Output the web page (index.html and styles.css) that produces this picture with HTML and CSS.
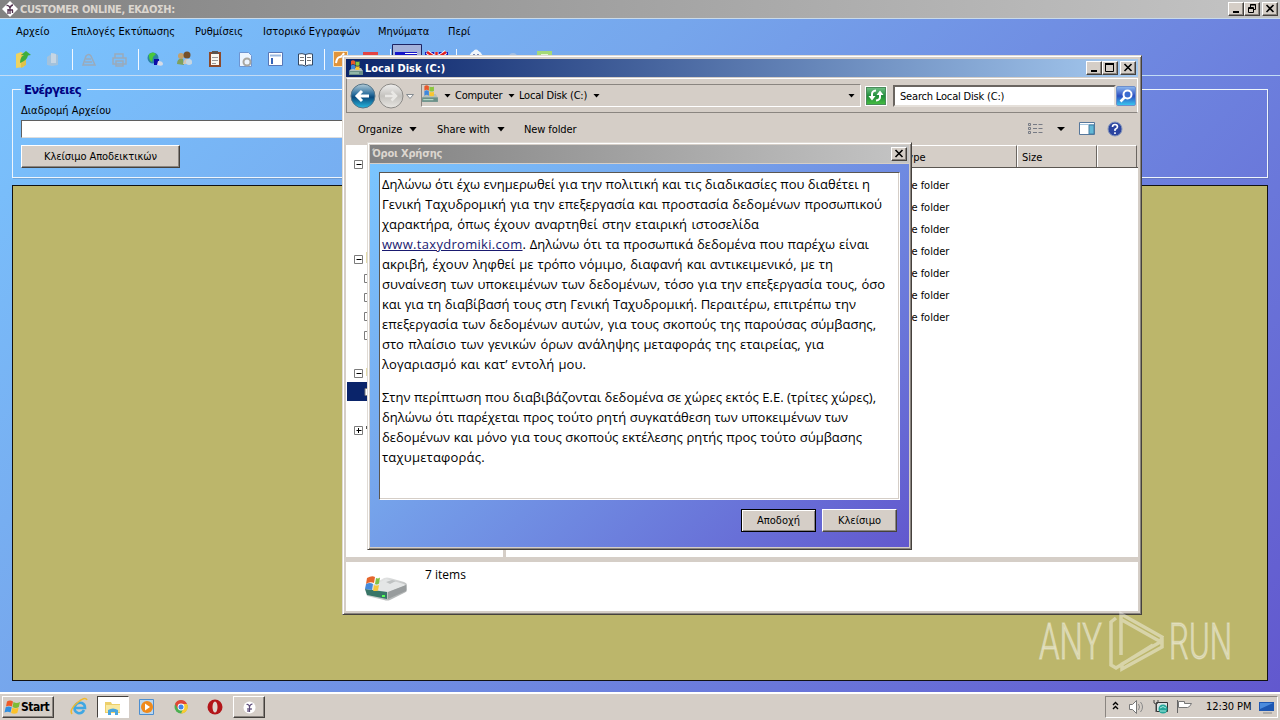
FILE: index.html
```html
<!DOCTYPE html>
<html lang="el">
<head>
<meta charset="utf-8">
<title>Customer Online</title>
<link rel="stylesheet" href="styles.css">
</head>
<body>
<svg class="defs" width="0" height="0">
  <defs>
    <linearGradient id="gb" x1="0" y1="0" x2="0" y2="1"><stop offset="0" stop-color="#b4ccd8"/><stop offset=".42" stop-color="#2c6f9e"/><stop offset=".55" stop-color="#0b4a7d"/><stop offset="1" stop-color="#27b8e0"/></linearGradient>
    <linearGradient id="gg" x1="0" y1="0" x2="0" y2="1"><stop offset="0" stop-color="#f0efee"/><stop offset=".5" stop-color="#c4c2be"/><stop offset="1" stop-color="#e8e6e2"/></linearGradient>
    <linearGradient id="gm" x1="0" y1="0" x2="1" y2="1"><stop offset="0" stop-color="#f4f4f4"/><stop offset="1" stop-color="#a4a8a8"/></linearGradient>
    <symbol id="flag" viewBox="0 0 16 16"><path d="M2.500 2.500q3-2 6 0L7.400 7.500Q4.500 6 1.500 7.500z" fill="#ee5a27"/><path d="M9 3q3 1.800 6.500 0L14.300 8q-3 1.800-6.300 0z" fill="#7dbb35"/><path d="M1.200 8.300q3-1.600 6 0L6 13.500q-2.700-1.600-6 0z" fill="#2f8ee0"/><path d="M7.800 8.800q3 1.600 6.300 0L12.800 14q-3 1.600-6.200 0z" fill="#fcc22a"/></symbol>
    <symbol id="disk" viewBox="0 0 16 16"><path d="M1 11l3-3h9l2 3v4H1z" fill="#b3bfbc"/><path d="M1 11h14v4H1z" fill="#6b9088"/><path d="M2 13h9" stroke="#b8dcc8"/><path d="M3 1q2-1.500 4 0v4Q5 3.500 3 5z" fill="#e8582a"/><path d="M7.500 1.300q2 1 4 0v4q-2 1-4 0z" fill="#8cc63f"/><path d="M3 5.500q2-1.500 4 0V9.500Q5 8 3 9.500z" fill="#3d87dc"/><path d="M7.500 6q2 1 4 0v3.500q-2 1-4 0z" fill="#f9c52f"/></symbol>
    <symbol id="cust" viewBox="0 0 16 16"><path d="M8 0l8 8-8 8-8-8z" fill="#fff"/><path d="M4.500 4.500Q7 4 8 7q1-3 3-3M8 6v7M6 9h5M6 13V8M10.500 9v3" stroke="#51304e" stroke-width="1.300" fill="none"/></symbol>
  </defs>
</svg>

<div class="desktop">
  <section class="app">
    <header class="titlebar app-title">
      <svg class="logo" width="16" height="16"><use href="#cust"/></svg>
      <span class="t-app">CUSTOMER ONLINE, ΕΚΔΟΣΗ:</span>
      <span class="grow"></span>
      <span class="cap"><svg width="14" height="12"><path d="M4 9h6" stroke="#000" stroke-width="2"/></svg></span>
      <span class="cap"><svg width="14" height="12" fill="none" stroke="#000"><path d="M5.500 4V1.500h5v5H9M5 2h6M3 5.500h6" /><path d="M3.500 4.500h5v5h-5z"/></svg></span>
      <span class="cap gap"><svg width="14" height="12"><path d="M3.500 2l7 7M10.500 2l-7 7" stroke="#000" stroke-width="1.600"/></svg></span>
    </header>
    <div class="client">
      <nav class="menubar">
        <span class="m1">Αρχείο</span><span class="m2">Επιλογές Εκτύπωσης</span><span class="m3">Ρυθμίσεις</span><span class="m4">Ιστορικό Εγγραφών</span><span class="m5">Μηνύματα</span><span class="m6">Περί</span>
      </nav>
      <div class="toolbar">
        <svg width="560" height="32">
          <g><path d="M16 11l5-2 3 2v13l-8 1z" fill="#eed35f"/><path d="M21 11l5 2v9l-5 3z" fill="#e0c24a"/><path d="M20 20q0-6 4-8l-3 0 5-4 5 4-3 .5q-1 5-8 7.500z" fill="#3fae3c"/></g>
          <g fill="#a3c2dc"><path d="M47 14l6-4 5 2v10l-6 1-5-1z"/><path d="M51 10l5 1v9h-5z" fill="#c6d6e4"/></g>
          <path d="M72.500 6v21M138.500 6v21M324.500 6v21M390.500 6v21M456.500 6v21" stroke="#f2f8ff"/>
          <g fill="none" stroke="#9aaabb" stroke-width="1.500"><path d="M83 22l3-9q3-3 5 0l4 9zM86 16h5M85 19h7" /><path d="M113 15h13v6h-13zM115 15v-4h8v4M116 18h7v5h-7z"/></g>
          <circle cx="153" cy="15" r="5.500" fill="#2b83a3"/><path d="M149 11q4-3 7 0l-3 3-1 5q-4-3-3-8z" fill="#49c83c"/><path d="M154 16h5v6h-5z" fill="#0c0ca8"/><path d="M158 18q5 0 5 3t-6 1z" fill="#d6dbe6"/>
          <circle cx="181" cy="13" r="3" fill="#c4a16c"/><circle cx="187" cy="12" r="3.500" fill="#74502a"/><path d="M177 21q0-6 6-5l1 6z" fill="#7fa05c"/><path d="M183 21q1-6 5-5t4 5z" fill="#d4c6b6"/><circle cx="189" cy="19" r="3" fill="#c5d7e5"/>
          <path d="M209 9h12v15h-12z" fill="#8d4a2b"/><path d="M211 11h8v11h-8z" fill="#f9f8f2"/><path d="M212 8h6v3h-6z" fill="#5b5550"/><path d="M212 14.500h6M212 17.500h6M212 20.500h4" stroke="#999"/>
          <path d="M239.500 9.500h9l3 3v11h-12z" fill="#edf5ff" stroke="#6d95d2"/><circle cx="247" cy="19" r="3.500" fill="none" stroke="#a9a7a1" stroke-width="2"/>
          <path d="M268.500 9.500h14v13h-14z" fill="#fff" stroke="#5877b6"/><path d="M270 12.500h11" stroke="#9bb9e0" stroke-width="2"/><path d="M271 15h2v6h-2z" fill="#3564b7"/>
          <path d="M298.500 11q3.500-1 7 .500 3.500-1.500 7-.500v11q-4-.5-7 1-3-1.500-7-1z" fill="#fff" stroke="#334863"/><path d="M305.500 11v11" stroke="#334863"/><path d="M300 14.500h4M300 17.500h4M307 14.500h4M307 17.500h4" stroke="#777"/>
          <path d="M333.500 8.500h14v15h-14z" fill="#e0943b" stroke="#f6e3c0"/><path d="M336 20q1-6 4-6 2 0 4-4" stroke="#fff" stroke-width="2" fill="none"/><path d="M363 9h15v12h-15z" fill="#e34343"/><path d="M366 12h9v5h-9z" fill="#fbd4d4"/>
          <path d="M392.500 1.500h29v22h-29z" fill="#a5b2da" stroke="#1d2464"/><path d="M395 9h22v4h-22z" fill="#1414c8"/><path d="M405 10.500h12" stroke="#fff"/><path d="M425 9h23v8h-23z" fill="#1717c0"/><path d="M427 9l10 7M446 9l-10 7M436.500 9v7" stroke="#fff" stroke-width="4"/><path d="M427 9l10 7M446 9l-10 7M436.500 9v7" stroke="#e02020" stroke-width="2.500"/>
          <circle cx="476" cy="14" r="6.500" fill="#f0f5fb"/><circle cx="476" cy="9" r="2.500" fill="#f0f5fb"/><circle cx="474" cy="12" r="1" fill="#5265a1"/><circle cx="478" cy="12" r="1" fill="#5265a1"/><circle cx="513" cy="14" r="4" fill="#a5bfe2"/><path d="M537 8h15v10h-15z" fill="#a5d979"/><path d="M541 11h7v4h-7z" fill="#e2f5d6"/>
        </svg>
      </div>
      <fieldset class="group">
        <legend>Ενέργειες</legend>
        <label class="path">Διαδρομή Αρχείου</label>
        <div class="field"></div>
        <button class="btn close-ev"><span>Κλείσιμο Αποδεικτικών</span></button>
      </fieldset>
      <div class="workarea"></div>
    </div>
  </section>

  <section class="explorer">
    <header class="titlebar ex-title">
      <svg class="ex-ico" width="16" height="16"><use href="#disk"/></svg>
      <span class="t-ex">Local Disk (C:)</span>
      <span class="grow"></span>
      <span class="cap"><svg width="14" height="12"><path d="M4 9h6" stroke="#000" stroke-width="2"/></svg></span>
      <span class="cap"><svg width="14" height="12"><path d="M2.500 2v7.500h8V2" fill="none" stroke="#000"/><path d="M2 2h9" stroke="#000" stroke-width="2"/></svg></span>
      <span class="cap gap"><svg width="14" height="12"><path d="M3.500 2l7 7M10.500 2l-7 7" stroke="#000" stroke-width="1.600"/></svg></span>
    </header>
    <div class="navband">
      <svg width="72" height="32"><circle cx="16" cy="16" r="12" fill="url(#gb)" stroke="#557487"/><path d="M22 16H10M15 11l-5 5 5 5" stroke="#fff" stroke-width="3" fill="none"/><circle cx="44" cy="16" r="12" fill="url(#gg)" stroke="#8b8986"/><path d="M38 16h11M44.500 11.500L49 16l-4.500 4.500" stroke="#e9e8e5" stroke-width="2.500" fill="none"/><path d="M59.500 14.500h7l-3.500 4z" fill="#fafafa" stroke="#858b90"/></svg>
      <div class="address">
        <svg class="ad-ico" width="18" height="18"><use href="#disk" width="18" height="18"/></svg>
        <i class="tri a1"></i><span class="ad1">Computer</span><i class="tri a2"></i><span class="ad2">Local Disk (C:)</span><i class="tri a3"></i><span class="grow"></span><i class="tri"></i>
      </div>
      <div class="refresh"><svg width="19" height="17"><path d="M2.500 9h7L6 13.500zM10.500 8h7L14 3.500z" fill="#fff"/><path d="M6 10V7q0-3 4-3.500M14 7v3q0 3-4 3.500" stroke="#fff" stroke-width="2" fill="none"/></svg></div>
      <div class="search"><span>Search Local Disk (C:)</span></div>
      <div class="mag"><svg width="18" height="18"><circle cx="10.500" cy="7.500" r="4" fill="#3b6cd0" stroke="#fff" stroke-width="2"/><path d="M7.500 10.500l-4 4" stroke="#fff" stroke-width="2.500"/></svg></div>
    </div>
    <div class="cmdbar">
      <span class="c1">Organize</span><i class="tri big k1"></i><span class="c2">Share with</span><i class="tri big k2"></i><span class="c3">New folder</span><span class="grow"></span>
      <svg width="100" height="18"><g stroke="#777b84" fill="none"><path d="M.5 3.500h2v2h-2zM.5 7.500h2v2h-2zM.5 11.500h2v2h-2z"/><path d="M5 4.500h4M10.500 4.500h4M5 8.500h4M10.500 8.500h4M5 12.500h4M10.500 12.500h4"/></g><path d="M29 7h8l-4 4z"/><path d="M51.500 2.500h15v12h-15z" fill="#fff" stroke="#56779b"/><path d="M52 4.500h14" stroke="#a4c5df"/><path d="M61 5h5v9h-5z" fill="#61b8d6" stroke="#477da1"/><circle cx="87" cy="9" r="7" fill="#2c45a0" stroke="#8597bb"/><path d="M84.500 7q0-2.500 2.500-2.500t2.500 2.500q0 1-2.500 2.500v1.500M87 12.300v1.700" stroke="#fff" stroke-width="1.600" fill="none"/></svg>
    </div>
    <div class="panes">
      <div class="tree">
        <svg width="24" height="412" fill="#fff" stroke="#7b7b7b"><path d="M8.500 15.500h8v8h-8zM8.500 110.500h8v8h-8zM8.500 224.500h8v8h-8zM8.500 281.500h8v8h-8z"/><path d="M1 237h20v19H1z" fill="#0a246a" stroke="none"/><path d="M24 129.500h-5.500v8H24M24 148.500h-5.500v8H24M24 167.500h-5.500v8H24M24 186.500h-5.500v8H24M24 243.500h-5v7h5"/><path d="M10.500 19.500h5M10.500 114.500h5M10.500 228.500h5M10.500 285.500h5M12.500 283v5" stroke="#000"/><path d="M20.500 107v11M20.500 223v8" stroke="#e4dcaa"/><path d="M20.500 281v3" stroke="#555"/></svg>
        <i class="splitter"></i>
      </div>
      <div class="files">
        <div class="cols"><b class="h1">Type</b><b class="h2">Size</b><b class="h3"></b></div>
        <ul><li>File folder</li><li>File folder</li><li>File folder</li><li>File folder</li><li>File folder</li><li>File folder</li><li>File folder</li></ul>
      </div>
    </div>
    <footer class="details">
      <svg width="48" height="30"><path d="M3 17L22 6q3-1 6 0l14 4q3 1 3 3v5q0 2-3 3L28 28q-3 1-6 0L5 24z" fill="url(#gm)"/><path d="M24 7l18 5q2 1 0 2l-16 6-21-3z" fill="#e4e6e6"/><path d="M26 20l18-7v6l-18 8z" fill="#989c9d"/><path d="M3 17l22 3v7L5 23z" fill="#387567"/><path d="M20 23h3v2h-3z" fill="#5f5"/><path d="M24 10l6-2 4 1-6 3z" fill="#bfc2c2"/><path d="M5 6q5-3 8-1l-1 6Q8 9 4 12z" fill="#e5662c"/><path d="M14 6q2 1 4-.5l-1 6q-2 1.500-4 .5z" fill="#7fc044"/><path d="M4 12q4-2 7 0l-1 6-7-1z" fill="#458ada"/><path d="M12 13q2 1 5 0l-1 5.500q-3 1-5 0z" fill="#f7c73c"/></svg>
      <span>7 items</span>
    </footer>
  </section>

  <section class="dialog">
    <header class="titlebar dl-title">
      <span class="t-dl">Όροι Χρήσης</span><span class="grow"></span>
      <span class="cap"><svg width="14" height="12"><path d="M3.500 2l7 7M10.500 2l-7 7" stroke="#000" stroke-width="1.600"/></svg></span>
    </header>
    <div class="dl-body">
      <div class="terms">
        <p>
          <span class="ln l1">Δηλώνω ότι έχω ενημερωθεί για την πολιτική και τις διαδικασίες που διαθέτει η</span>
          <span class="ln l2">Γενική Ταχυδρομική για την επεξεργασία και προστασία δεδομένων προσωπικού</span>
          <span class="ln l3">χαρακτήρα, όπως έχουν αναρτηθεί στην εταιρική ιστοσελίδα</span>
          <span class="ln l4"><a>www.taxydromiki.com</a>. Δηλώνω ότι τα προσωπικά δεδομένα που παρέχω είναι</span>
          <span class="ln l5">ακριβή, έχουν ληφθεί με τρόπο νόμιμο, διαφανή και αντικειμενικό, με τη</span>
          <span class="ln l6">συναίνεση των υποκειμένων των δεδομένων, τόσο για την επεξεργασία τους, όσο</span>
          <span class="ln l7">και για τη διαβίβασή τους στη Γενική Ταχυδρομική. Περαιτέρω, επιτρέπω την</span>
          <span class="ln l8">επεξεργασία των δεδομένων αυτών, για τους σκοπούς της παρούσας σύμβασης,</span>
          <span class="ln l9">στο πλαίσιο των γενικών όρων ανάληψης μεταφοράς της εταιρείας, για</span>
          <span class="ln l10">λογαριασμό και κατ’ εντολή μου.</span>
        </p>
        <p>
          <span class="ln l11">Στην περίπτωση που διαβιβάζονται δεδομένα σε χώρες εκτός Ε.Ε. (τρίτες χώρες),</span>
          <span class="ln l12">δηλώνω ότι παρέχεται προς τούτο ρητή συγκατάθεση των υποκειμένων των</span>
          <span class="ln l13">δεδομένων και μόνο για τους σκοπούς εκτέλεσης ρητής προς τούτο σύμβασης</span>
          <span class="ln l14">ταχυμεταφοράς.</span>
        </p>
      </div>
      <div class="actions"><button class="btn default"><span>Αποδοχή</span></button><button class="btn"><span>Κλείσιμο</span></button></div>
    </div>
  </section>

  <svg class="watermark" width="240" height="70" viewBox="0 0 240 70">
    <g class="wm-text"><text x="2" y="49" textLength="63" lengthAdjust="spacingAndGlyphs">ANY</text><text x="132" y="49" textLength="63" lengthAdjust="spacingAndGlyphs">RUN</text></g>
    <path d="M79 8l-5 4v43l5 3 37-23M84 45V4l41 23-1 3M85 10l39 22M85 59l40-22v-6L85 54z" fill="none" stroke="#fff" stroke-opacity=".42" stroke-width="3.500"/>
  </svg>

  <footer class="taskbar">
    <div class="start"><svg width="17" height="16"><use href="#flag"/></svg><b>Start</b></div>
    <div class="tb ie"><svg width="20" height="20"><path d="M15 13q-2 4-6 3-5-2-3-7 2-4 7-3 3 1 3 5H6" fill="none" stroke="#3fa7e3" stroke-width="2.600"/><path d="M3 17Q0 13 8 6t10-3" fill="none" stroke="#efb92f" stroke-width="1.600"/></svg></div>
    <div class="tb on"><svg width="18" height="18"><path d="M1 4h6l1 2h8v9H1z" fill="#edcf6a"/><path d="M2 7h14v7H2z" fill="#f9e9a0"/><path d="M4 17v-5q5-3 10 0v5h-3v-3H7v3z" fill="#4aa6df"/></svg></div>
    <div class="tb wm"><svg width="18" height="18"><path d="M1.500 1.500h14v15h-14z" fill="#bcd7ee" stroke="#4c8ed0"/><circle cx="9" cy="9" r="6" fill="#f08a1c"/><path d="M7 5.500v7l5-3.500z" fill="#fff"/></svg></div>
    <div class="tb cr"><svg width="18" height="18"><circle cx="9" cy="9" r="6.500" fill="#4caf50"/><path d="M3 6A6.500 6.500 0 0 1 15 6H9L6 11z" fill="#e04636"/><path d="M15 6A6.500 6.500 0 0 1 9 15.500l3-6.500-3-3z" fill="#fbcb32"/><circle cx="9" cy="9" r="3.400" fill="#fff"/><circle cx="9" cy="9" r="2.500" fill="#4385e8"/></svg></div>
    <div class="tb op"><svg width="18" height="18"><circle cx="9" cy="9" r="7.500" fill="#b31519"/><ellipse cx="9" cy="9" rx="2.500" ry="5.500" fill="#dfd6d0"/></svg></div>
    <div class="tb run"><svg width="15" height="15"><circle cx="7.500" cy="7.500" r="6" fill="#fff"/><path d="M4.500 4.500Q7 4 7.500 7 8 4 10.500 4M7.500 6v6M6 8v4M9 8v2" stroke="#5b4a78" stroke-width="1.200" fill="none"/></svg></div>
    <span class="grow"></span>
    <div class="tray">
      <svg width="92" height="20"><path d="M7 8l2.500-2.500L12 8M7 12l2.500-2.500L12 12" fill="none" stroke="#000" stroke-width="1.400"/><path d="M23.500 7.500h3l4-4v13l-4-4h-3z" fill="#fff" stroke="#777"/><path d="M32.500 7q2 3 0 6M34.500 5q4 5 0 10" fill="none" stroke="#888"/><path d="M50.500 5.500h11v9h-11z" fill="#d8e4e4" stroke="#333"/><path d="M48 3v3q2 2 4 0V3M50 7v8" stroke="#444" fill="none"/><circle cx="57" cy="12" r="4.500" fill="#25a69a"/><path d="M54 11q3-3 6 0M54 14h6" stroke="#a6eadf" fill="none"/><path d="M71.500 3v13" stroke="#666"/><path d="M72.500 4.500h6v2h7q-2 4-4 4h-9z" fill="#fff" stroke="#777"/></svg>
      <span class="clock">12:30 PM</span>
      <svg width="18" height="18"><path d="M3 4h15v9H3z" fill="#1d57b2"/><path d="M4 5h13L4 11z" fill="#4b8bdd"/><path d="M7 15h9" stroke="#888"/></svg>
    </div>
  </footer>
</div>
</body>
</html>
```
FILE: styles.css
```css
* { box-sizing: border-box; }
body { margin: 0; overflow: hidden; font: 11px/14px "DejaVu Sans Condensed", "Noto Sans", sans-serif; font-stretch: condensed; color: #000; }
.defs { position: absolute; }
svg { display: block; flex: none; }
.grow { flex: 1; }
.desktop { position: relative; width: 1280px; height: 720px; overflow: hidden; display: flex; flex-direction: column; white-space: nowrap; }
.titlebar { display: flex; align-items: center; height: 18px; font-weight: bold; flex: none; }
.cap { width: 16px; height: 14px; background: #d5cec7; border: 1px solid; border-color: #fff #45413d #45413d #fff; box-shadow: inset -1px -1px #8a8580; overflow: hidden; flex: none; }
.cap.gap { margin-left: 2px; }
.btn { font: inherit; background: #d5cec7; border: 1px solid; border-color: #fff #45413d #45413d #fff; box-shadow: inset -1px -1px #8a8580; padding: 1px 0 0; color: #000; text-align: center; }

.app { height: 692px; display: flex; flex-direction: column; }
.app-title { background: linear-gradient(90deg, #828282, #c4c4c4); color: #dcd6cf; padding: 0 2px; }
.logo { margin-right: 2px; }
.t-app { letter-spacing: -.37px; padding-top: 1px; }
.client { flex: 1; border-top: 1px solid #c9daea; background: linear-gradient(135deg, #7ac5ff, #76a6ec 35%, #6258ce); display: flex; flex-direction: column; }
.menubar { height: 23px; padding: 6px 0 0 16px; display: flex; }
.menubar span { flex: none; }
.m1 { width: 55px; } .m2 { width: 124px; } .m3 { width: 68px; } .m4 { width: 115px; } .m5 { width: 70px; }
.toolbar { height: 34px; border-bottom: 1px solid #c3dcf5; }
.toolbar svg { margin-top: 1px; }
.group { margin: 6px 12px 0; height: 96px; padding: 0 8px; border: 1px solid #eef5fc; min-width: 0; box-shadow: 1px 1px rgba(80, 90, 110, .25); }
.group legend { padding: 0 6px 0 3px; font-size: 13px; line-height: 16px; font-weight: bold; color: #00007f; height: 14px; letter-spacing: -.7px; }
.path { display: block; margin-top: 8px; height: 16px; }
.field { width: 1000px; height: 18px; background: #fff; border: 1px solid; border-color: #5f5f5f #ddd #ddd #5f5f5f; }
.close-ev { display: block; width: 159px; height: 23px; margin-top: 7px; letter-spacing: -.08px; }
.workarea { margin: 7px 12px 11px; flex: 1; background: #bcb66b; border: 1px solid #111; }

.explorer { position: absolute; left: 342px; top: 55px; width: 800px; height: 560px; padding: 3px; background: #d5cec7; border: 1px solid; border-color: #e0dbd5 #45413d #45413d #e0dbd5; box-shadow: inset 1px 1px #fff, inset -1px -1px #8a8580; display: flex; flex-direction: column; }
.ex-title { background: linear-gradient(90deg, #0a246a, #a6caf0); color: #fff; height: 18px; padding: 0 2px; }
.ex-ico { margin-right: 1px; }
.t-ex { padding-top: 1px; }
.navband { height: 35px; display: flex; align-items: center; margin-top: 1px; border: 1px solid #fff; border-left-color: #8a8580; border-bottom-color: #8a8580; outline: 0; }
.address { width: 440px; height: 23px; margin-left: 2px; border: 1px solid; border-color: #8a8580 #fff #fff #8a8580; display: flex; align-items: center; padding-right: 5px; }
.ad-ico { margin: -3px 2px 0 -1px; }
.tri { width: 7px; height: 4px; background: #000; clip-path: polygon(0 0, 100% 0, 50% 100%); flex: none; }
.tri.big { width: 8px; height: 5px; }
.a1 { margin-left: 3px; } .ad1 { width: 53px; margin-left: 4px; letter-spacing: -.25px; } .ad2 { margin-left: 4px; width: 74px; letter-spacing: -.2px; }
.refresh { width: 22px; height: 20px; margin-left: 4px; border: 1px solid #fff; background: linear-gradient(#74c58a, #218c3a 50%, #48c142); box-shadow: inset 0 0 0 1px #4a8a5a; }
.search { width: 223px; height: 22px; margin-left: 6px; background: #fff; border: 2px solid; border-color: #6a6560 #e5e0da #e5e0da #6a6560; padding: 3px 5px 0; letter-spacing: -.18px; }
.mag { width: 20px; height: 20px; margin-left: 0; background: linear-gradient(#8ab5ee, #2d4ec0 50%, #38c4ee); border: 1px solid #6d8ecb; border-radius: 2px; }
.cmdbar { height: 32px; display: flex; align-items: center; padding: 0 10px 0 12px; }
.cmdbar span { padding-top: 1px; }
.c1 { width: 51px; } .c2 { margin-left: 20px; width: 60px; } .c3 { margin-left: 19px; letter-spacing: -.1px; }
.panes { height: 412px; display: flex; background: #fff; }
.tree { width: 160px; position: relative; }
.splitter { position: absolute; right: 0; top: 0; width: 3px; height: 412px; background: #d5cec7; }
.files { flex: 1; }
.cols { display: flex; height: 23px; justify-content: flex-end; background: #d5cec7; border-bottom: 1px solid #5a5651; padding-right: 1px; }
.cols b { font-weight: normal; border-top: 1px solid #fff; border-left: 1px solid #fff; border-right: 1px solid #6b6661; padding: 5px 4px 0; }
.h1 { width: 119px; } .h2 { width: 80px; } .h3 { width: 40px; }
.files ul { list-style: none; margin: 7px 0 0; padding: 0 0 0 395px; }
.files li { height: 22px; line-height: 22px; }
.details { flex: 1; border-top: 5px solid #d5cec7; background: #fff; display: flex; padding: 8px 0 0 16px; }
.details svg { margin-top: 2px; }
.details span { margin-left: 15px; font: 12px/14px "Open Sans", sans-serif; margin-top: -2px; }

.dialog { position: absolute; left: 367px; top: 142px; width: 545px; height: 408px; padding: 2px; background: #d5cec7; border: 1px solid; border-color: #e0dbd5 #45413d #45413d #e0dbd5; box-shadow: inset 1px 1px #fff, inset -1px -1px #8a8580; display: flex; flex-direction: column; }
.dl-title { background: linear-gradient(90deg, #828282, #c4c4c4); color: #dcd6cf; padding: 0 2px; height: 18px; }
.t-dl { letter-spacing: -.2px; }
.dl-body { flex: 1; margin-top: 1px; background: linear-gradient(135deg, #7ac5ff, #76a6ec 35%, #6258ce); padding: 8px 8px 0 9px; }
.terms { width: 521px; height: 328px; background: #fff; border: 1px solid; border-color: #5a5651 #fff #fff #5a5651; padding: 1px 2px; font: 13px/20px "Open Sans", sans-serif; box-shadow: inset -1px -1px #d5cec7; }
.terms p { margin: 0 0 13px; }
.ln { display: block; text-align-last: justify; height: 20px; white-space: nowrap; }
.terms a { color: #1a1a70; text-decoration: underline; letter-spacing: .3px; }
.l1 { width: 488px; } .l2 { width: 500px; } .l3 { width: 377px; } .l4 { width: 487px; } .l5 { width: 451px; } .l6 { width: 503px; } .l7 { width: 474px; } .l8 { width: 494px; } .l9 { width: 442px; } .l10 { width: 204px; letter-spacing: .1px; } .l11 { width: 494px; } .l12 { width: 466px; } .l13 { width: 480px; } .l14 { width: 103px; letter-spacing: .2px; }
.actions { display: flex; justify-content: flex-end; gap: 6px; margin-top: 9px; padding-right: 4px; }
.actions .btn { width: 75px; height: 23px; }
.btn.default { border-color: #000; box-shadow: inset 1px 1px #fff, inset -1px -1px #8a8580; }

.watermark { position: absolute; left: 1037px; top: 610px; }
.wm-text { font: 300 50px Roboto, sans-serif; fill: #fff; fill-opacity: .42; stroke: #fff; stroke-opacity: .3; stroke-width: 1.5px; }

.taskbar { height: 28px; background: #d5cec7; border-top: 2px solid #fff; display: flex; align-items: center; padding: 0 2px 0 2px; }
.start { width: 52px; height: 22px; border: 1px solid; border-color: #fff #45413d #45413d #fff; box-shadow: inset -1px -1px #8a8580; display: flex; align-items: center; padding-left: 1px; }
.start b { font-size: 12px; letter-spacing: -.5px; }
.tb { height: 22px; display: flex; align-items: center; justify-content: center; flex: none; }
.ie { width: 38px; margin-left: 6px; } .on { width: 32px; margin-left: -1px; background: #fff; border: 1px solid; border-color: #45413d #fff #fff #45413d; } .wm { width: 36px; } .cr { width: 32px; } .op { width: 36px; } .run { width: 32px; border: 1px solid; border-color: #fff #45413d #45413d #fff; box-shadow: inset -1px -1px #8a8580; }
.tray { width: 173px; height: 22px; border: 1px solid; border-color: #8a8580 #fff #fff #8a8580; display: flex; align-items: center; }
.clock { width: 50px; margin-left: 8px; letter-spacing: -.1px; }
```
